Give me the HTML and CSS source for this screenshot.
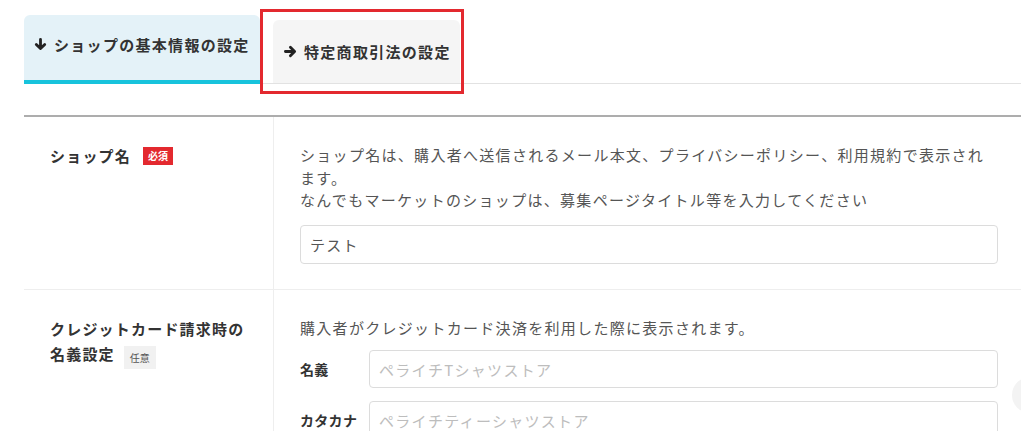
FILE: index.html
```html
<!DOCTYPE html>
<html lang="ja">
<head>
<meta charset="utf-8">
<title>ショップ設定</title>
<link rel="stylesheet" href="styles.css">
</head>
<body>
<div class="page">
  <div class="tabs">
    <div class="tab tab-active">
      <svg class="arrow" viewBox="0 0 12 12" width="13" height="13"><path d="M6 1.3v8.4M2.1 5.9L6 9.8l3.9-3.9" fill="none" stroke="#222" stroke-width="2.6" stroke-linecap="round" stroke-linejoin="round"/></svg>
      <span>ショップの基本情報の設定</span>
    </div>
    <div class="tab tab-other">
      <svg class="arrow" viewBox="0 0 12 12" width="13" height="13"><path d="M1.3 6h8.4M5.9 2.1L9.8 6l-3.9 3.9" fill="none" stroke="#222" stroke-width="2.6" stroke-linecap="round" stroke-linejoin="round"/></svg>
      <span>特定商取引法の設定</span>
    </div>
    <div class="highlight"></div>
  </div>

  <div class="form">
    <div class="row">
      <div class="label-cell">
        <span class="label">ショップ名</span><span class="badge badge-req">必須</span>
      </div>
      <div class="field-cell">
        <p class="desc">ショップ名は、購入者へ送信されるメール本文、プライバシーポリシー、利用規約で表示されます。<br>なんでもマーケットのショップは、募集ページタイトル等を入力してください</p>
        <div class="input input-main">テスト</div>
      </div>
    </div>
    <div class="row">
      <div class="label-cell">
        <span class="label">クレジットカード請求時の<br>名義設定</span><span class="badge badge-opt">任意</span>
      </div>
      <div class="field-cell">
        <p class="desc">購入者がクレジットカード決済を利用した際に表示されます。</p>
        <div class="sub-row sub-first">
          <span class="sub-label">名義</span>
          <div class="input placeholder">ペライチTシャツストア</div>
        </div>
        <div class="sub-row">
          <span class="sub-label">カタカナ</span>
          <div class="input placeholder">ペライチティーシャツストア</div>
        </div>
      </div>
    </div>
  </div>
  <div class="float-btn"></div>
</div>
</body>
</html>
```

FILE: styles.css
```css
* { box-sizing: border-box; }
html, body { margin: 0; padding: 0; background: #fff; overflow: hidden; }
body {
  font-family: "Noto Sans CJK JP", "Noto Sans", sans-serif;
  color: #333;
  width: 1021px;
  height: 431px;
}
.page { position: relative; padding: 15px 0 0 24px; }

.tabs {
  position: relative;
  display: flex;
  align-items: flex-end;
  border-bottom: 1px solid #e2e2e2;
  height: 69px;
}
.tab {
  display: flex;
  align-items: center;
  gap: 7px;
  font-weight: 700;
  font-size: 15px;
  letter-spacing: 1.3px;
  color: #333;
  border-radius: 6px 6px 0 0;
}
.tab-active {
  width: 236px;
  height: 69px;
  margin-bottom: -1px;
  padding: 0 0 6px 10px;
  background: #e4f2f8;
  border-bottom: 4px solid #17c3dc;
}
.tab-other {
  width: 187px;
  height: 63px;
  margin-left: 13px;
  padding: 0 0 0 11px;
  background: #f5f5f5;
}
.arrow { flex: none; }
.highlight {
  position: absolute;
  left: 236px;
  top: -6px;
  width: 204px;
  height: 85px;
  border: 3px solid #e3292f;
}

.form {
  margin-top: 31px;
  border-top: 2px solid #adadad;
}
.row {
  display: flex;
  border-bottom: 1px solid #eeeeee;
}
.label-cell {
  width: 250px;
  flex: none;
  border-right: 1px solid #eeeeee;
  padding: 26px 10px 20px 26px;
}
.label {
  font-weight: 700;
  font-size: 15px;
  letter-spacing: 1.2px;
  line-height: 25px;
  color: #333;
}
.badge {
  display: inline-block;
  vertical-align: 2px;
  margin-left: 12px;
  font-size: 10px;
  line-height: 18px;
  padding: 0 5px;
  letter-spacing: 0;
}
.badge-req { background: #e3292f; color: #fff; font-weight: 700; }
.badge-opt { background: #f1f1f1; color: #555; height: 23px; line-height: 23px; vertical-align: -2px; margin-left: 9px; padding: 0 6px; }

.field-cell {
  flex: 1;
  padding: 27px 23px 25px 26px;
}
.desc {
  margin: 0;
  font-size: 15px;
  letter-spacing: 1.3px;
  line-height: 22.5px;
  color: #555;
}
.input {
  border: 1px solid #dcdcdc;
  border-radius: 4px;
  height: 39px;
  padding: 0 9px;
  display: flex;
  align-items: center;
  font-size: 15px;
  letter-spacing: 1.3px;
  color: #555;
}
.input-main { margin-top: 13px; }
.placeholder { color: #bdbdbd; flex: 1; height: 38px; }
.sub-row {
  display: flex;
  align-items: center;
  margin-top: 13px;
}
.sub-first { margin-top: 11px; }
.sub-label {
  width: 69px;
  flex: none;
  font-weight: 700;
  font-size: 14px;
  letter-spacing: 0.3px;
  color: #333;
}
.float-btn {
  position: absolute;
  left: 1012px;
  top: 377px;
  width: 36px;
  height: 36px;
  border-radius: 50%;
  background: #f3f3f3;
}
```
